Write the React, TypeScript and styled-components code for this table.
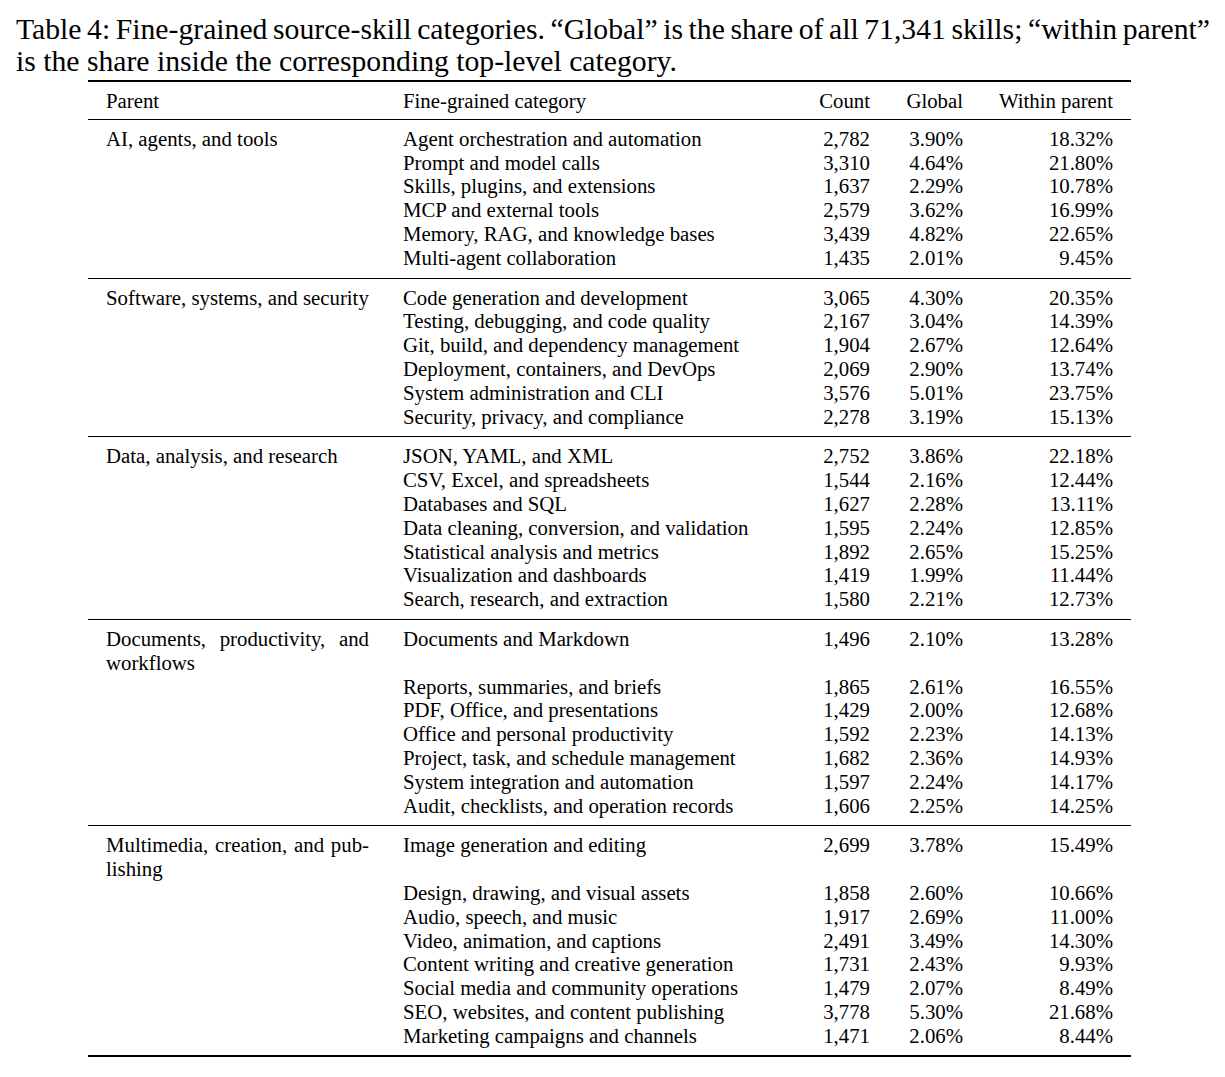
import React from 'react';
import styled, { createGlobalStyle } from 'styled-components';

const GlobalStyle = createGlobalStyle`
  html, body {
    margin: 0;
    padding: 0;
    background: #fff;
  }
  body {
    font-family: "Liberation Serif", "Times New Roman", serif;
    color: #000;
  }
`;

// Styled Components
const Page = styled.div`
  width: 1225px;
  padding-top: 13px;
`;

const Caption = styled.div`
  margin: 0 0 3px 16px;
  width: 1194px;
  font-size: 29.7px;
  line-height: 32px;
`;

// first caption line is stretched edge to edge, like TeX's justified paragraph
const CaptionLine = styled.div<{ $justify?: boolean }>`
  white-space: nowrap;
  text-align: ${(p) => (p.$justify ? 'justify' : 'left')};
  text-align-last: ${(p) => (p.$justify ? 'justify' : 'auto')};
  word-spacing: ${(p) => (p.$justify ? '-3px' : 'normal')};
`;

const Table = styled.div`
  margin-left: 88px;
  width: 1043px;
  box-sizing: border-box;
  padding: 0 18px;
  border-top: 2px solid #000;
  border-bottom: 2.5px solid #000;
  font-size: 20.8px;
  line-height: 23.8px;
`;

const HeaderRow = styled.div`
  margin: 0 -18px;
  padding: 7px 18px 6px;
  border-bottom: 1.2px solid #000;
`;

const Group = styled.div`
  margin: 0 -18px;
  padding: 7px 18px 8px;
  border-bottom: 1.2px solid #000;

  &:last-child {
    border-bottom: none;
  }
`;

const Row = styled.div`
  display: grid;
  grid-template-columns: 297px 382px 85px 93px 150px;
`;

const Cell = styled.div<{ $align?: 'left' | 'right' }>`
  text-align: ${(p) => p.$align ?? 'left'};
  white-space: nowrap;
`;

const ParentCell = styled.div`
  padding-right: 34px;
  text-align: justify;
  hyphens: manual;
`;

type Item = [string, string, string, string];
type Section = { parent: string; items: Item[] };

const sections: Section[] = [
  {
    parent: 'AI, agents, and tools',
    items: [
      ['Agent orchestration and automation', '2,782', '3.90%', '18.32%'],
      ['Prompt and model calls', '3,310', '4.64%', '21.80%'],
      ['Skills, plugins, and extensions', '1,637', '2.29%', '10.78%'],
      ['MCP and external tools', '2,579', '3.62%', '16.99%'],
      ['Memory, RAG, and knowledge bases', '3,439', '4.82%', '22.65%'],
      ['Multi-agent collaboration', '1,435', '2.01%', '9.45%'],
    ],
  },
  {
    parent: 'Software, systems, and security',
    items: [
      ['Code generation and development', '3,065', '4.30%', '20.35%'],
      ['Testing, debugging, and code quality', '2,167', '3.04%', '14.39%'],
      ['Git, build, and dependency management', '1,904', '2.67%', '12.64%'],
      ['Deployment, containers, and DevOps', '2,069', '2.90%', '13.74%'],
      ['System administration and CLI', '3,576', '5.01%', '23.75%'],
      ['Security, privacy, and compliance', '2,278', '3.19%', '15.13%'],
    ],
  },
  {
    parent: 'Data, analysis, and research',
    items: [
      ['JSON, YAML, and XML', '2,752', '3.86%', '22.18%'],
      ['CSV, Excel, and spreadsheets', '1,544', '2.16%', '12.44%'],
      ['Databases and SQL', '1,627', '2.28%', '13.11%'],
      ['Data cleaning, conversion, and validation', '1,595', '2.24%', '12.85%'],
      ['Statistical analysis and metrics', '1,892', '2.65%', '15.25%'],
      ['Visualization and dashboards', '1,419', '1.99%', '11.44%'],
      ['Search, research, and extraction', '1,580', '2.21%', '12.73%'],
    ],
  },
  {
    parent: 'Documents, productivity, and workflows',
    items: [
      ['Documents and Markdown', '1,496', '2.10%', '13.28%'],
      ['Reports, summaries, and briefs', '1,865', '2.61%', '16.55%'],
      ['PDF, Office, and presentations', '1,429', '2.00%', '12.68%'],
      ['Office and personal productivity', '1,592', '2.23%', '14.13%'],
      ['Project, task, and schedule management', '1,682', '2.36%', '14.93%'],
      ['System integration and automation', '1,597', '2.24%', '14.17%'],
      ['Audit, checklists, and operation records', '1,606', '2.25%', '14.25%'],
    ],
  },
  {
    parent: 'Multimedia, creation, and pub\u00ADlishing',
    items: [
      ['Image generation and editing', '2,699', '3.78%', '15.49%'],
      ['Design, drawing, and visual assets', '1,858', '2.60%', '10.66%'],
      ['Audio, speech, and music', '1,917', '2.69%', '11.00%'],
      ['Video, animation, and captions', '2,491', '3.49%', '14.30%'],
      ['Content writing and creative generation', '1,731', '2.43%', '9.93%'],
      ['Social media and community operations', '1,479', '2.07%', '8.49%'],
      ['SEO, websites, and content publishing', '3,778', '5.30%', '21.68%'],
      ['Marketing campaigns and channels', '1,471', '2.06%', '8.44%'],
    ],
  },
];

export default function App() {
  return (
    <Page>
      <GlobalStyle />
      <Caption>
        <CaptionLine $justify>
          Table 4: Fine-grained source-skill categories. “Global” is the share of all 71,341 skills; “within parent”
        </CaptionLine>
        <CaptionLine>is the share inside the corresponding top-level category.</CaptionLine>
      </Caption>
      <Table>
        <HeaderRow>
          <Row>
            <Cell>Parent</Cell>
            <Cell>Fine-grained category</Cell>
            <Cell $align="right">Count</Cell>
            <Cell $align="right">Global</Cell>
            <Cell $align="right">Within parent</Cell>
          </Row>
        </HeaderRow>
        {sections.map((s) => (
          <Group key={s.parent}>
            {s.items.map(([name, count, global, within], i) => (
              <Row key={name}>
                {i === 0 ? <ParentCell>{s.parent}</ParentCell> : <div />}
                <Cell>{name}</Cell>
                <Cell $align="right">{count}</Cell>
                <Cell $align="right">{global}</Cell>
                <Cell $align="right">{within}</Cell>
              </Row>
            ))}
          </Group>
        ))}
      </Table>
    </Page>
  );
}
